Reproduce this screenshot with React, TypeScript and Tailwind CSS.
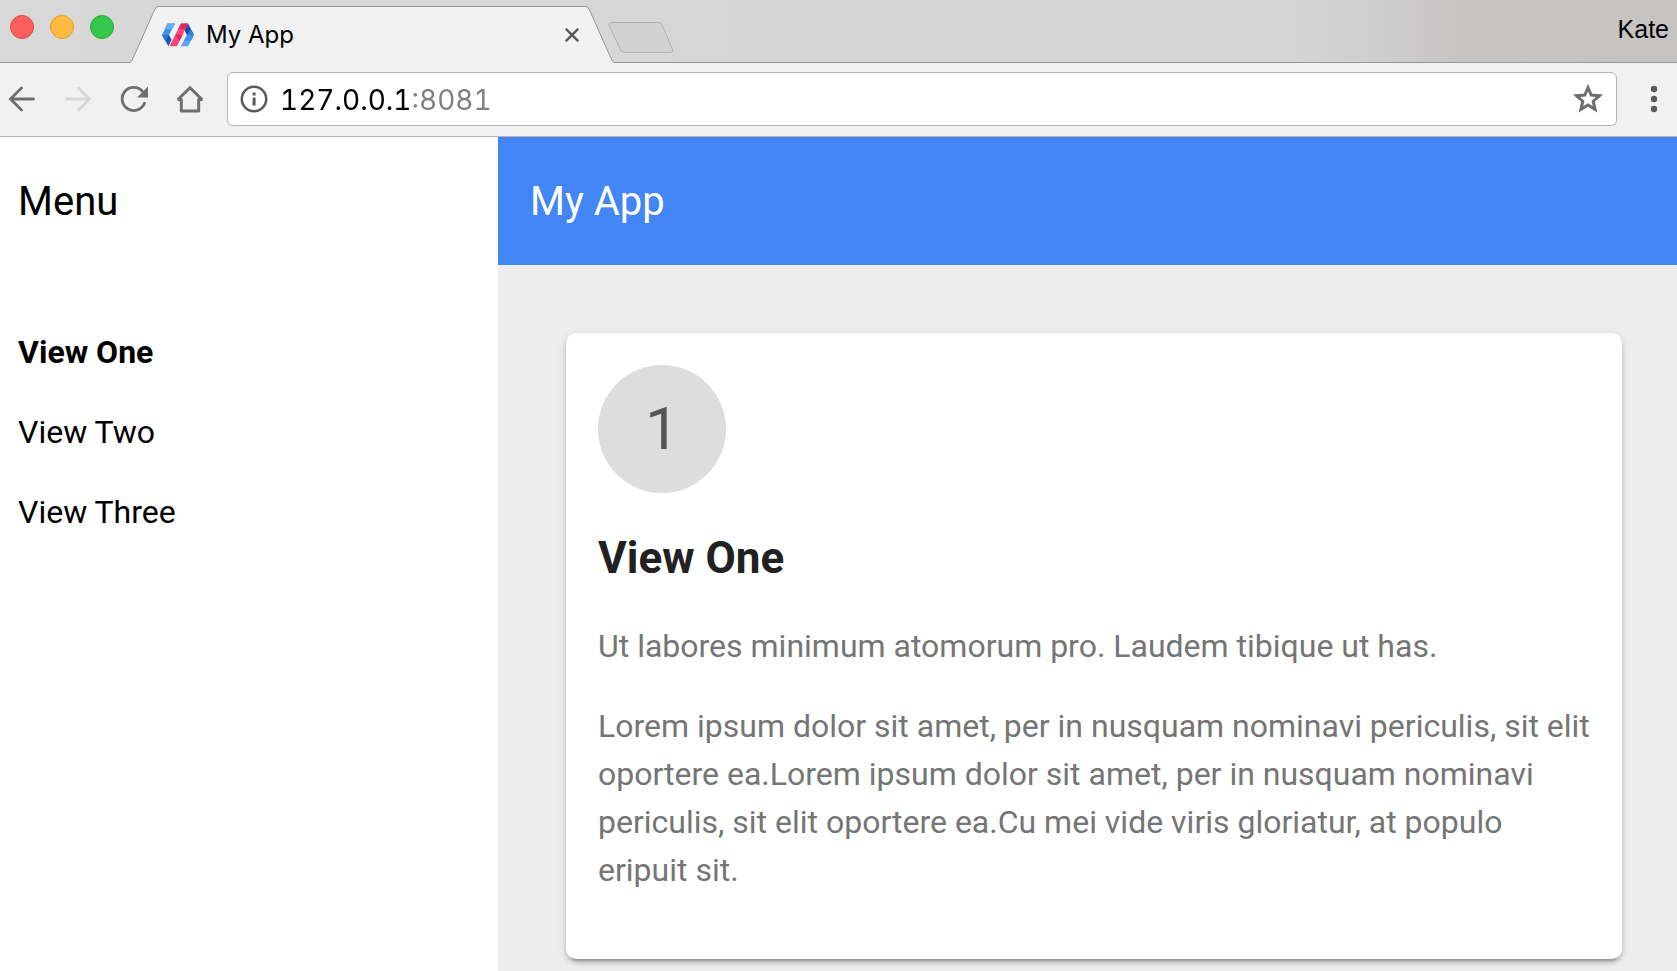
import React, { useState } from "react";

const uiFont = "font-[Inter,'Liberation_Sans',sans-serif]";

function PolymerLogo() {
  return (
    <svg width="32" height="24" viewBox="0 0 32 24" aria-hidden="true">
      <path d="M5.500.500H13L7 12H0z" fill="#3b93ea" />
      <path d="M5.500.500H13L10 6.200H2.500z" fill="#64aef5" />
      <path d="M0 12h7l2.600 4.800-3.100 6.500z" fill="#1a56b8" />
      <path d="M0 12h7l-3.800 6z" fill="#2a78dc" />
      <path d="M19 .5h7L15 23.300H7.500z" fill="#fb4278" />
      <path d="M19 .5h7l-2.800 5.800h-7z" fill="#f01f60" />
      <path d="M13.300 12h7.200l-2.700 5.600z" fill="#e91e63" />
      <path d="M26 .5L32 12h-7l-2.400-4.600z" fill="#1a4fa8" />
      <path d="M28.800 6.200L32 12h-7z" fill="#2f7fe0" />
      <path d="M25 12h7l-6 11.300h-7.200z" fill="#5aa5f0" />
      <path d="M25 12h7l-3.200 5.800H22z" fill="#3d94ea" />
    </svg>
  );
}

function TabStrip() {
  return (
    <div className="flex h-[63px] items-end border-b border-[#989797] bg-[linear-gradient(90deg,#d8d8d8_0%,#d6d5d5_77%,#cfcece_82%,#c7c5c4_87%,#c6c3c3_100%)]">
      <div className="flex gap-4 self-start pt-[15px] pl-2.5">
        <button aria-label="Close window" className="size-6 rounded-full border border-[#e2463f] bg-[#fc605c]" />
        <button aria-label="Minimize window" className="size-6 rounded-full border border-[#dfa023] bg-[#fdbc40]" />
        <button aria-label="Zoom window" className="size-6 rounded-full border border-[#27aa35] bg-[#34c749]" />
      </div>
      <div className="-mb-px ml-4 flex h-[57px] w-[484px]">
        <svg className="w-7 shrink-0" viewBox="0 0 28 57" aria-hidden="true">
          <path d="M0 57v-.5Q1.500 56 2.500 53.500L24.500 4Q26 .5 28 .5V57z" fill="#f1f1f1" />
          <path d="M-1 56.500Q1 56.500 2.200 54L24.500 4Q26 .5 28 .5" fill="none" stroke="#989797" />
        </svg>
        <div className="flex min-w-0 flex-1 items-center border-t border-[#989797] bg-[#f1f1f1] px-1">
          <PolymerLogo />
          <span className={`ml-3 flex-1 text-2xl leading-7 text-black ${uiFont}`}>My App</span>
          <button aria-label="Close tab" className="flex size-5 items-center justify-center">
            <svg width="14" height="14" viewBox="0 0 14 14" stroke="#5a5a5a" strokeWidth="2.400" aria-hidden="true">
              <path d="M.8.800l12.400 12.400M13.200.800L.8 13.200" />
            </svg>
          </button>
        </div>
        <svg className="w-7 shrink-0" viewBox="0 0 28 57" aria-hidden="true">
          <path d="M28 57v-.5Q26.500 56 25.500 53.500L3.500 4Q2 .5 0 .5V57z" fill="#f1f1f1" />
          <path d="M29 56.500Q27 56.500 25.800 54L3.500 4Q2 .5 0 .5" fill="none" stroke="#989797" />
        </svg>
      </div>
      <button aria-label="New tab" className="-ml-1.5 mb-2">
        <svg className="block" width="66" height="32" viewBox="0 0 66 32" fill="#d1d1d1" stroke="#b2b2b2" aria-hidden="true">
          <path d="M3 .5H50Q53 .5 54.500 3.500L64.500 27.500Q65.500 30.500 62.500 30.500H17Q14 30.500 12.500 28L1 3Q.3.500 3 .5z" />
        </svg>
      </button>
      <button className="mr-2 ml-auto self-start pt-[15px] font-['Liberation_Sans',Arial,sans-serif] text-[25px] leading-7 text-black">
        Kate
      </button>
    </div>
  );
}

const navButton = "flex size-9 shrink-0 items-center justify-center";

function Toolbar() {
  const [url, setUrl] = useState("127.0.0.1:8081");
  return (
    <div className="flex items-center border-b border-[#b4b4b4] bg-[#f1f1f1] pt-[9px] pr-[5px] pb-2.5 pl-1">
      <div className="flex gap-5">
        <button aria-label="Back" className={navButton}>
          <svg width="28" height="28" viewBox="0 0 28 28" fill="none" stroke="#6e6e6e" strokeWidth="2.800" strokeLinecap="round" aria-hidden="true">
            <path d="M13.500 3L2.500 14l11 11M3 14h22.500" />
          </svg>
        </button>
        <button aria-label="Forward" className={navButton} disabled>
          <svg width="28" height="28" viewBox="0 0 28 28" fill="none" stroke="#d7d7d7" strokeWidth="2.800" strokeLinecap="round" aria-hidden="true">
            <path d="M14.500 3l11 11-11 11M25 14H2.500" />
          </svg>
        </button>
        <button aria-label="Reload" className={navButton}>
          <svg width="28" height="28" viewBox="0 0 28 28" aria-hidden="true">
            <path d="M24.500 18.300A11.600 11.600 0 1 1 22.200 6" fill="none" stroke="#6e6e6e" strokeWidth="2.800" strokeLinecap="round" />
            <path d="M28 1.500v11H17z" fill="#6e6e6e" />
          </svg>
        </button>
        <button aria-label="Home" className={navButton}>
          <svg width="28" height="28" viewBox="0 0 28 28" fill="none" stroke="#6e6e6e" strokeWidth="3" aria-hidden="true">
            <path d="M2 14.500L14 2.800l12 11.700" />
            <path d="M1.500 14.600h3.800v11.300h17.400V14.600h3.800" strokeLinejoin="round" />
          </svg>
        </button>
      </div>
      <div className="mr-[19px] ml-[19px] flex h-[54px] min-w-0 flex-1 items-center rounded-md border border-[#b4b4b4] bg-white px-3">
        <button aria-label="View site information" className="shrink-0">
          <svg width="28" height="28" viewBox="0 0 28 28" aria-hidden="true">
            <circle cx="14" cy="14" r="12.200" fill="none" stroke="#5a5a5a" strokeWidth="2.500" />
            <path d="M12.600 7.500h3v3h-3zM12.600 12.500h3v8h-3z" fill="#5a5a5a" />
          </svg>
        </button>
        <input
          aria-label="Address"
          value={url}
          onChange={(event) => setUrl(event.target.value)}
          className={`ml-3 min-w-0 flex-1 bg-[linear-gradient(90deg,#000_130px,#808080_130px)] bg-clip-text pt-0.5 text-[28px] leading-9 text-transparent tabular-nums outline-none ${uiFont}`}
        />
        <button aria-label="Bookmark this page" className="shrink-0">
          <svg width="32" height="32" viewBox="0 0 32 32" fill="none" stroke="#6e6e6e" strokeWidth="3" aria-hidden="true">
            <path d="M16 4.500l3.200 7.600 8.300.7-6.300 5.400 1.900 8.100-7.100-4.300-7.100 4.300 1.900-8.100-6.300-5.400 8.300-.7z" />
          </svg>
        </button>
      </div>
      <button aria-label="Browser menu" className={navButton}>
        <svg width="28" height="28" viewBox="0 0 28 28" fill="#5a5a5a" aria-hidden="true">
          <circle cx="14" cy="4" r="3.200" />
          <circle cx="14" cy="14" r="3.200" />
          <circle cx="14" cy="24" r="3.200" />
        </svg>
      </button>
    </div>
  );
}

const views = ["View One", "View Two", "View Three"];

function Drawer() {
  return (
    <aside className="w-[498px] shrink-0 bg-white pl-[18px] text-black">
      <div className="flex h-32 items-center pt-0.5 text-[40px]">Menu</div>
      <nav className="mt-[47px] flex flex-col">
        {views.map((view, index) => (
          <a
            key={view}
            href={`#view${index + 1}`}
            aria-current={index === 0 ? "page" : undefined}
            className="text-[32px] leading-20 aria-[current=page]:font-bold"
          >
            {view}
          </a>
        ))}
      </nav>
    </aside>
  );
}

export default function App() {
  return (
    <div className="flex min-h-screen flex-col font-[Roboto,sans-serif]">
      <TabStrip />
      <Toolbar />
      <div className="flex flex-1">
        <Drawer />
        <div className="flex min-w-0 flex-1 flex-col bg-[#eeeeee]">
          <header className="flex h-32 items-center bg-[#4285f4] pt-0.5 pl-8 text-[40px] text-white">My App</header>
          <main className="pt-[68px] pr-[55px] pb-3 pl-[68px]">
            <article className="rounded-[10px] bg-white px-8 pt-8 pb-[33px] text-[32px] leading-12 text-[#757575] shadow-[0_4px_4px_0_rgba(0,0,0,0.14),0_2px_10px_0_rgba(0,0,0,0.12),0_6px_2px_-4px_rgba(0,0,0,0.2)]">
              <div className="flex size-32 items-center justify-center rounded-full bg-[#dddddd] text-[60px] text-[#555555]">1</div>
              <h1 className="mt-8 text-[44px] leading-[66px] font-bold text-[#212121]">View One</h1>
              <div className="mt-[31px] mb-8 flex flex-col gap-8">
                <p>Ut labores minimum atomorum pro. Laudem tibique ut has.</p>
                <p>
                  Lorem ipsum dolor sit amet, per in nusquam nominavi periculis, sit elit oportere ea.Lorem ipsum dolor
                  sit amet, per in nusquam nominavi periculis, sit elit oportere ea.Cu mei vide viris gloriatur, at
                  populo eripuit sit.
                </p>
              </div>
            </article>
          </main>
        </div>
      </div>
    </div>
  );
}
